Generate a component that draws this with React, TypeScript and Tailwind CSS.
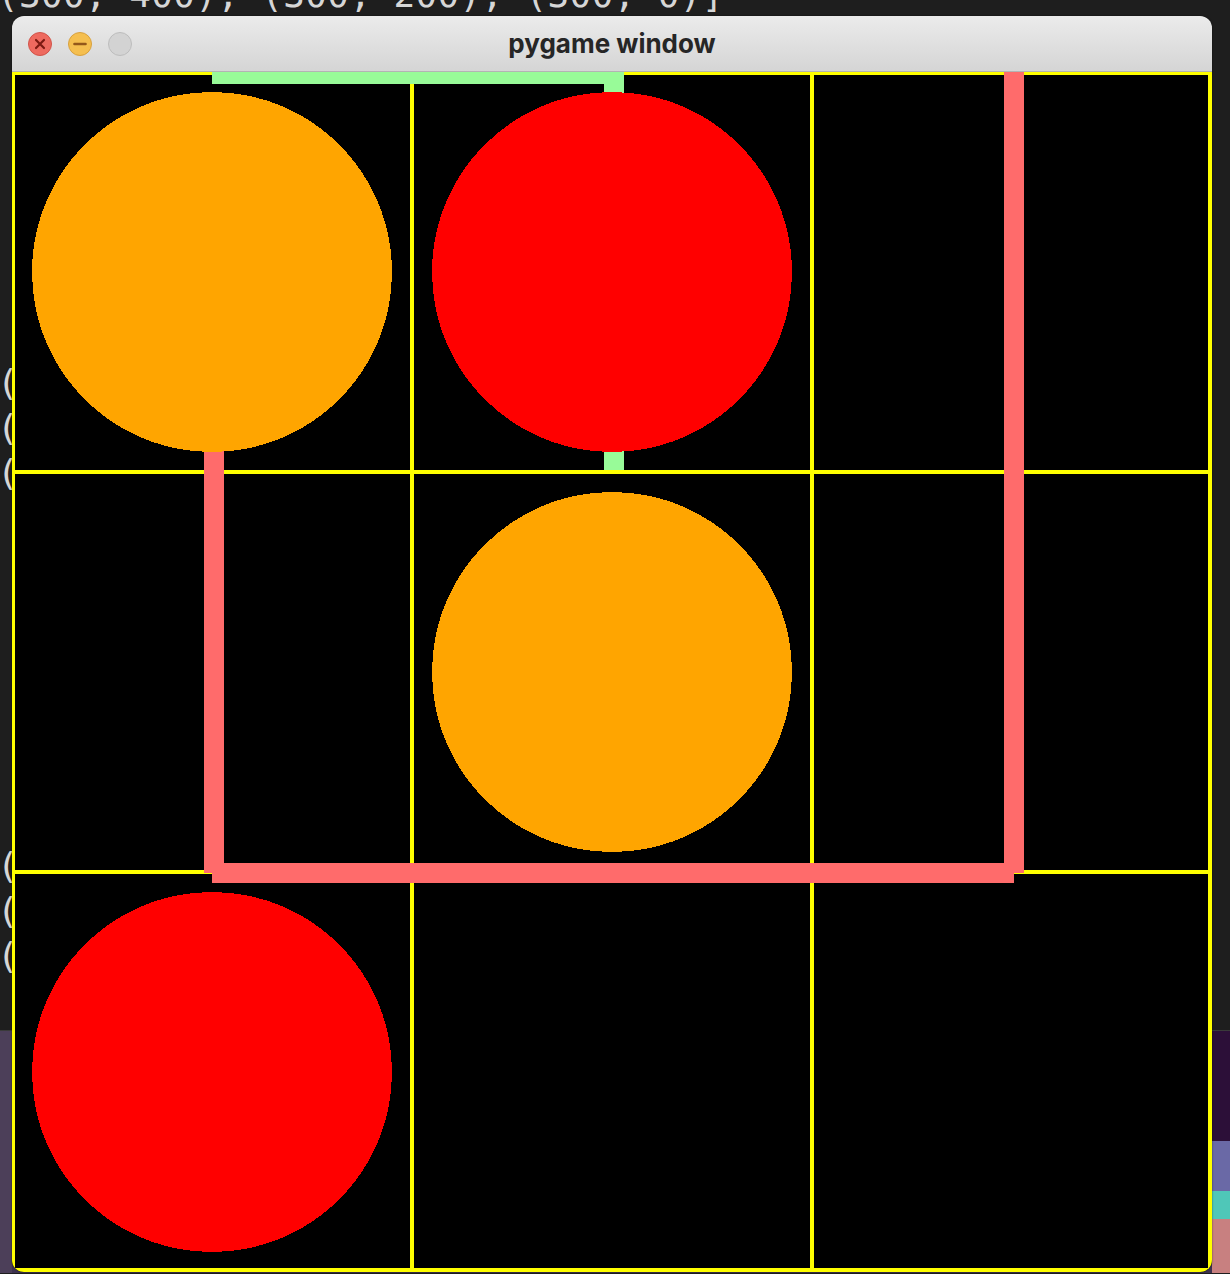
import React from "react";

// pygame board drawn at 2x: 600x600 logical -> 1200x1200 screen px
const CELL = 400;

const circles = [
  { cx: 200, cy: 200, fill: "#ffa500" },
  { cx: 600, cy: 200, fill: "#ff0000" },
  { cx: 600, cy: 600, fill: "#ffa500" },
  { cx: 200, cy: 1000, fill: "#ff0000" },
];

function TrafficLights() {
  return (
    <div className="flex items-center gap-4 pl-4">
      <div className="flex h-6 w-6 items-center justify-center rounded-full border border-[#d1544a] bg-[#ee6a5f]">
        <svg width="12" height="12" viewBox="0 0 12 12">
          <path d="M2 2 L10 10 M10 2 L2 10" stroke="#7d1a12" strokeWidth="2.2" strokeLinecap="round" />
        </svg>
      </div>
      <div className="flex h-6 w-6 items-center justify-center rounded-full border border-[#d8a13f] bg-[#f5bf4f]">
        <svg width="14" height="4" viewBox="0 0 14 4">
          <path d="M1.5 2 L12.5 2" stroke="#94581a" strokeWidth="2.6" strokeLinecap="round" />
        </svg>
      </div>
      <div className="h-6 w-6 rounded-full border border-[#bdbdbd] bg-[#d3d3d3]" />
    </div>
  );
}

function Board() {
  return (
    <svg width="1200" height="1200" viewBox="0 0 1200 1200" shapeRendering="crispEdges" className="block bg-black">
      {/* yellow grid */}
      <rect x={0} y={0} width={3} height={1200} fill="#ffff00" />
      <rect x={CELL - 2} y={0} width={4} height={1200} fill="#ffff00" />
      <rect x={CELL * 2 - 2} y={0} width={4} height={1200} fill="#ffff00" />
      <rect x={1196} y={0} width={4} height={1200} fill="#ffff00" />
      <rect x={0} y={0} width={1200} height={3} fill="#ffff00" />
      <rect x={0} y={CELL - 2} width={1200} height={4} fill="#ffff00" />
      <rect x={0} y={CELL * 2 - 2} width={1200} height={4} fill="#ffff00" />
      <rect x={0} y={1196} width={1200} height={4} fill="#ffff00" />

      {/* green path */}
      <rect x={200} y={0} width={412} height={12} fill="#98fb98" />
      <rect x={592} y={0} width={20} height={398} fill="#98fb98" />

      {/* salmon path */}
      <rect x={192} y={200} width={20} height={601} fill="#ff6b6b" />
      <rect x={200} y={791} width={802} height={20} fill="#ff6b6b" />
      <rect x={992} y={0} width={20} height={801} fill="#ff6b6b" />

      {circles.map((c, i) => (
        <circle key={i} cx={c.cx} cy={c.cy} r={180} fill={c.fill} />
      ))}
    </svg>
  );
}

export default function App() {
  return (
    <div className="relative h-[1274px] w-[1230px] overflow-hidden bg-[#1e1e1e]">
      {/* terminal behind the window */}
      <div
        className="h-[1031px] overflow-hidden border-b border-[#3a3a3a] bg-[#1e1e1e] text-[36px] leading-[45px] tracking-[0.35px] text-[#d6d6d6]"
        style={{ fontFamily: '"DejaVu Sans Mono", monospace' }}
      >
        <div className="-ml-[3px] -mt-[28px] whitespace-pre">(300, 400), (300, 200), (300, 0)]</div>
        <div className="-ml-[3px] mt-[343px] whitespace-pre">
          <div>(0, 0), (0, 200)</div>
          <div>(0, 200), (200, 200)</div>
          <div>(200, 200), (200, 400)</div>
        </div>
        <div className="-ml-[3px] mt-[348px] whitespace-pre">
          <div>(300, 400), (500, 400)</div>
          <div>(500, 400), (500, 0)</div>
          <div>(500, 0), (300, 0)</div>
        </div>
      </div>

      {/* desktop wallpaper */}
      <div className="flex h-[242px]">
        <div className="w-[12px] bg-[#4c3f59]" />
        <div className="flex-1 bg-[#3e3350]" />
        <div className="flex w-[18px] flex-col">
          <div className="h-[110px] bg-[#2c0f38]" />
          <div className="h-[50px] bg-[#6a69a6]" />
          <div className="h-[28px] bg-[#4fc7b8]" />
          <div className="flex-1 bg-[#c88080]" />
        </div>
      </div>

      {/* pygame window */}
      <div className="absolute left-[12px] top-[16px] w-[1200px] overflow-hidden rounded-[12px] shadow-[0_0_2px_rgba(0,0,0,0.6)]">
        <div className="relative flex h-[56px] items-center border-b border-[#b3b3b3] bg-gradient-to-b from-[#ebebeb] to-[#d5d5d5]">
          <TrafficLights />
          <div
            className="absolute inset-x-0 top-0 flex h-full items-center justify-center text-[26px] font-bold text-[#262626]"
            style={{ fontFamily: "Inter, sans-serif" }}
          >
            pygame window
          </div>
        </div>
        <Board />
      </div>
    </div>
  );
}
